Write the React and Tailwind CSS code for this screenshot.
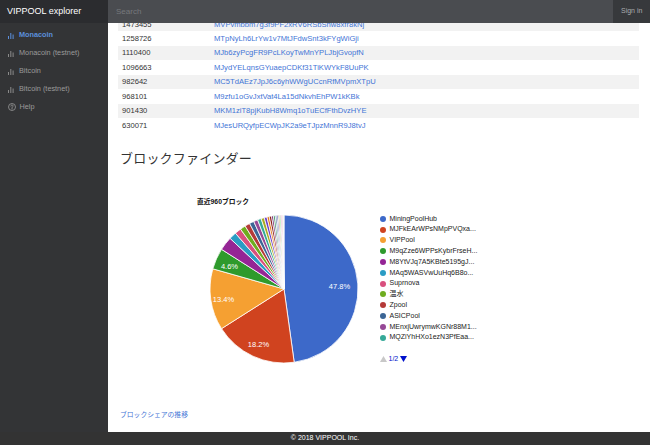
import React from "react";

const rows = [
  ["1473455", "MVPvmbbm7g3f9PF2xRV6RSbShw8xfr8kNj"],
  ["1258726", "MTpNyLh6LrYw1v7MtJFdwSnt3kFYgWiGji"],
  ["1110400", "MJb6zyPcgFR9PcLKoyTwMnYPLJbjGvopfN"],
  ["1096663", "MJydYELqnsGYuaepCDKf31TiKWYkF8UuPK"],
  ["982642", "MC5TdAEz7JpJ6c6yhWWgUCcnRfMVpmXTpU"],
  ["968101", "M9zfu1oGvJxtVat4La15dNkvhEhPW1kKBk"],
  ["901430", "MKM1ziT8pjKubH8Wmq1oTuECfFthDvzHYE"],
  ["630071", "MJesURQyfpECWpJK2a9eTJpzMnnR9J8tvJ"],
];

const slices = [
  [47.8, "#3d69c9"],
  [18.2, "#d0431f"],
  [13.4, "#f5a032"],
  [4.6, "#2e9a2c"],
  [3.0, "#952595"],
  [1.6, "#2a9cc4"],
  [1.4, "#d9507e"],
  [1.2, "#6fad1f"],
  [1.1, "#b53a38"],
  [1.0, "#3b6595"],
  [0.9, "#964896"],
  [0.8, "#35a998"],
  [0.7, "#aaaa22"],
  [0.6, "#6a3fc8"],
  [0.5, "#e27a1a"],
  [0.5, "#8b1a15"],
  [0.4, "#651a67"],
  [0.4, "#3a9262"],
  [0.35, "#5a77a6"],
  [0.3, "#3f44ab"],
  [0.3, "#b77a2f"],
  [0.25, "#2ccd36"],
  [0.2, "#b22385"],
  [0.2, "#ee4a9f"],
  [0.15, "#9c5f3c"],
  [0.15, "#cccccc"],
];

const legend = [
  ["MiningPoolHub", "#3d69c9"],
  ["MJFkEArWPsNMpPVQxa...", "#d0431f"],
  ["VIPPool", "#f5a032"],
  ["M9qZze6WPPsKybrFrseH...", "#2e9a2c"],
  ["M8YtVJq7A5KBte5195gJ...", "#952595"],
  ["MAq5WASVwUuHq6B8o...", "#2a9cc4"],
  ["Suprnova", "#d9507e"],
  ["温水", "#6fad1f"],
  ["Zpool", "#b53a38"],
  ["ASICPool", "#3b6595"],
  ["MEnxjUwrymwKGNr88M1...", "#964896"],
  ["MQZiYhHXo1ezN3PfEaa...", "#35a998"],
];

function Pie() {
  const cx = 80, cy = 80, r = 74;
  let acc = 0;
  const pt = (deg) => {
    const a = (deg * Math.PI) / 180;
    return [cx + r * Math.sin(a), cy - r * Math.cos(a)];
  };
  const paths = slices.map(([v, c], i) => {
    const a0 = (acc / 100) * 360;
    acc += v;
    const a1 = (acc / 100) * 360;
    const [x0, y0] = pt(a0);
    const [x1, y1] = pt(a1);
    const large = a1 - a0 > 180 ? 1 : 0;
    const d = `M${cx},${cy} L${x0},${y0} A${r},${r} 0 ${large} 1 ${x1},${y1} Z`;
    return <path key={i} d={d} fill={c} stroke="#ffffff" strokeWidth="0.8" />;
  });
  const lbl = { fill: "#fff", fontSize: 7.5, fontFamily: "'Liberation Sans', Arial, sans-serif", textAnchor: "middle", dominantBaseline: "central" };
  return (
    <svg width="160" height="160" viewBox="0 0 160 160" className="block">
      {paths}
      <text x="135.5" y="77" {...lbl}>47.8%</text>
      <text x="54.5" y="135" {...lbl}>18.2%</text>
      <text x="19.5" y="90" {...lbl}>13.4%</text>
      <text x="25.5" y="57" {...lbl}>4.6%</text>
    </svg>
  );
}

function BarIcon({ color }) {
  return (
    <svg width="6" height="7" viewBox="0 0 6 7" className="shrink-0">
      <rect x="0" y="4" width="1" height="3" fill={color} />
      <rect x="2.3" y="1" width="1" height="6" fill={color} />
      <rect x="4.6" y="2.5" width="1" height="4.5" fill={color} />
    </svg>
  );
}

function HelpIcon() {
  return (
    <svg width="8" height="8" viewBox="0 0 16 16" className="shrink-0" fill="none" stroke="#999" strokeWidth="1.6">
      <circle cx="8" cy="8" r="7" />
      <path d="M5.8 6.2a2.2 2.2 0 1 1 3 2c-.6.3-.8.7-.8 1.4" strokeLinecap="round" />
      <circle cx="8" cy="11.8" r="0.5" fill="#999" />
    </svg>
  );
}

const navItems = [
  ["Monacoin", true],
  ["Monacoin (testnet)", false],
  ["Bitcoin", false],
  ["Bitcoin (testnet)", false],
];

export default function App() {
  return (
    <div
      className="w-[650px] h-[445px] flex flex-col overflow-hidden bg-white"
      style={{ fontFamily: "'Liberation Sans', Arial, 'Noto Sans CJK JP', sans-serif" }}
    >
      {/* navbar */}
      <div className="h-[23px] flex shrink-0 bg-[#37393c]">
        <div className="w-[108px] bg-[#2b2c2f] flex items-center pl-[7px] text-white text-[9px]">
          VIPPOOL explorer
        </div>
        <div className="flex-1 bg-[#4a4c50] flex items-center pl-[8px] text-[#76787c] text-[8px]">
          Search
        </div>
        <div className="w-[37px] flex items-center pl-[8px] text-[#a9abae] text-[7px]">Sign in</div>
      </div>

      <div className="flex flex-1 min-h-0">
        {/* sidebar */}
        <div className="w-[108px] bg-[#333436] shrink-0 pt-[4px] flex flex-col">
          {navItems.map(([t, act]) => (
            <div key={t} className="h-[17.8px] flex items-center pl-[8px] gap-[5px] text-[7.3px]">
              <BarIcon color={act ? "#5b8fdc" : "#8a8a8a"} />
              <span className={act ? "text-[#5b8fdc] font-bold" : "text-[#9a9a9a]"}>{t}</span>
            </div>
          ))}
          <div className="h-[17.8px] flex items-center pl-[7.5px] gap-[4px] text-[7.3px] text-[#9a9a9a]">
            <HelpIcon />
            <span>Help</span>
          </div>
        </div>

        {/* main */}
        <div className="flex-1 min-w-0 overflow-hidden">
          <div className="-mt-[6px] ml-[10px] mr-[11px] text-[7.6px] text-[#333]">
            {rows.map(([h, a], i) => (
              <div
                key={h}
                className={`h-[14.45px] flex items-center ${i % 2 === 0 ? "bg-[#f2f2f2]" : "bg-white"}`}
              >
                <div className="w-[96px] pl-[4px]">{h}</div>
                <div className="text-[#3f74d6]">{a}</div>
              </div>
            ))}
          </div>

          <div
            className="mt-[17px] ml-[12px] text-[13px] leading-[16px] text-[#333] tracking-[0.2px]"
            style={{ fontFamily: "'Noto Sans CJK JP', sans-serif" }}
          >
            ブロックファインダー
          </div>

          <div className="mt-[31px] flex">
            <div className="ml-[89px] flex flex-col">
              <div className="text-[6.8px] leading-[9px] font-bold text-[#111]">直近960ブロック</div>
              <div className="mt-[3.5px] ml-[6.5px]">
                <Pie />
              </div>
            </div>
            <div className="ml-[16px] mt-[17px] flex flex-col text-[7px] text-[#222]">
              {legend.map(([t, c]) => (
                <div key={t} className="h-[10.8px] flex items-center gap-[4px]">
                  <span className="w-[6px] h-[6px] rounded-full shrink-0" style={{ backgroundColor: c }} />
                  <span>{t}</span>
                </div>
              ))}
              <div className="mt-[11px] h-[10px] flex items-center gap-[2px] text-[#0011cc]">
                <svg width="7" height="6" viewBox="0 0 7 6"><path d="M3.5 0L7 6H0Z" fill="#c8c8c8" /></svg>
                <span className="text-[7px]">1/2</span>
                <svg width="7" height="6" viewBox="0 0 7 6"><path d="M0 0H7L3.5 6Z" fill="#0011cc" /></svg>
              </div>
            </div>
          </div>

          <div className="mt-[40px] ml-[12px] text-[6.8px] text-[#3f74d6]" style={{ fontFamily: "'Noto Sans CJK JP', sans-serif" }}>
            ブロックシェアの推移
          </div>
        </div>
      </div>

      {/* footer */}
      <div className="h-[13px] shrink-0 bg-[#333] flex items-center justify-center text-white text-[7px]">
        © 2018 VIPPOOL Inc.
      </div>
    </div>
  );
}
